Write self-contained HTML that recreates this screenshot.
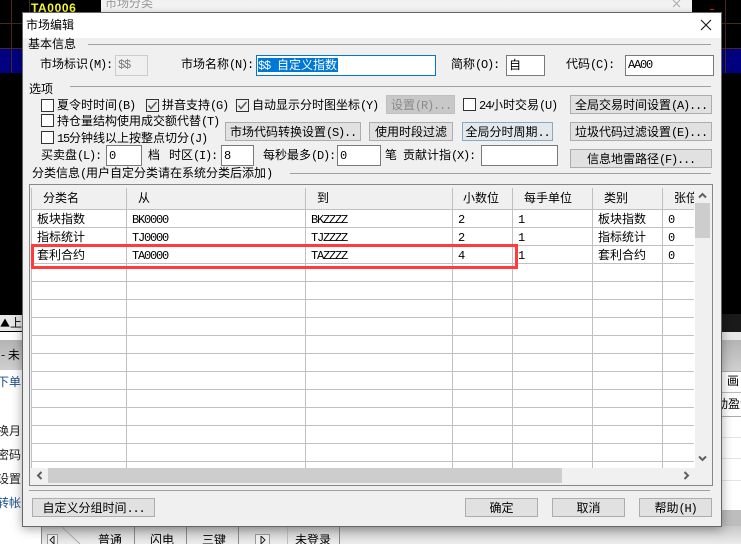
<!DOCTYPE html>
<html><head><meta charset="utf-8">
<style>
html,body{margin:0;padding:0;background:#000}
#r{position:relative;width:741px;height:544px;overflow:hidden;background:#000}
#r div,#r span.t{position:absolute;box-sizing:border-box}
.t{font:12px/14px "WenQuanYi Zen Hei","Noto Sans CJK SC",sans-serif;white-space:nowrap;color:#000}
i{font:normal 12px/14px "Liberation Mono",monospace;letter-spacing:-1.2px}
.b{background:#e1e1e1;border:1px solid #adadad;font:12px/17px "WenQuanYi Zen Hei","Noto Sans CJK SC",sans-serif;text-align:center;white-space:nowrap;color:#000;overflow:hidden}
.in{background:#fff;border:1px solid #7a7a7a;height:21px}
.l{background:#a0a0a0;height:1px}
.h{background:#c0c0c0;height:1px;left:31px;width:663px}
.v{background:#c0c0c0;width:1px}
.c{width:13px;height:13px;background:#fff;border:1px solid #333}
.c.k{background:#eee}
.c svg{position:absolute;left:0;top:0}
</style></head><body>
<div id="r">
<!-- background top -->
<div style="left:0;top:48px;width:741px;height:25px;background:#000080"></div>
<div style="left:0;top:23px;width:741px;height:1px;background:#4a2a20"></div>
<div style="left:0;top:48px;width:741px;height:1px;background:#4a2a20"></div>
<div style="left:11px;top:0;width:1px;height:73px;background:#4a2a20"></div>
<div style="left:29px;top:0;width:1px;height:73px;background:#4a2a20"></div>
<div style="left:725px;top:0;width:1px;height:73px;background:#4a2a20"></div>
<div style="left:710px;top:9px;width:4px;height:1px;background:#e02020"></div>
<span class="t" style="left:31px;top:1px;color:#ffff30;font:bold 12px/14px 'Liberation Sans',sans-serif;letter-spacing:.6px">TA0006</span>
<div style="left:101px;top:0;width:591px;height:13px;background:linear-gradient(#f0f0f0,#fff)"></div>
<span class="t" style="left:105px;top:-4px;color:#999">市场分类</span>
<svg style="position:absolute;left:672px;top:0" width="10" height="9"><path d="M1 0L8 7M8 0L1 7" stroke="#aaa" fill="none"/></svg>

<!-- background left bottom -->
<div style="left:0;top:315px;width:23px;height:17px;background:#e8e8e8;border-bottom:1px solid #000"></div>
<span class="t" style="left:0;top:316px"><span style="font-size:10px">▲</span>上</span>
<div style="left:0;top:332px;width:23px;height:212px;background:#fff"></div>
<div style="left:0;top:340px;width:23px;height:30px;background:linear-gradient(#b4b4b4,#cfcfcf)"></div>
<span class="t" style="left:1px;top:348px">- 未</span>
<span class="t" style="left:-3px;top:375px;color:#1a4f8a">下单</span>
<span class="t" style="left:-3px;top:424px;color:#222">换月</span>
<span class="t" style="left:-3px;top:448px;color:#222">密码</span>
<span class="t" style="left:-3px;top:472px;color:#222">设置</span>
<span class="t" style="left:-3px;top:496px;color:#1a4f8a">转帐</span>
<!-- background right bottom -->
<div style="left:721px;top:340px;width:20px;height:204px;background:#fff"></div>
<div style="left:721px;top:314px;width:20px;height:18px;background:#1a1a1a"></div>
<div style="left:721px;top:332px;width:20px;height:8px;background:#e8e8e8"></div>
<div style="left:721px;top:340px;width:20px;height:31px;background:linear-gradient(#b4b4b4,#cfcfcf)"></div>
<div style="left:721px;top:371px;width:20px;height:1px;background:#aaa"></div>
<div style="left:721px;top:392px;width:20px;height:1px;background:#bbb"></div>
<div style="left:721px;top:416px;width:20px;height:1px;background:#aaa"></div>
<div style="left:721px;top:437px;width:20px;height:1px;background:#e4e4e4"></div>
<div style="left:721px;top:458px;width:20px;height:1px;background:#e4e4e4"></div>
<div style="left:721px;top:480px;width:20px;height:1px;background:#e4e4e4"></div>
<div style="left:721px;top:510px;width:20px;height:16px;background:#bdbdbd"></div>
<div style="left:721px;top:526px;width:20px;height:18px;background:linear-gradient(#e4e4e4,#f2f2f2)"></div>
<span class="t" style="left:727px;top:374px">画</span>
<span class="t" style="left:716px;top:397px">动盈亏</span>
<!-- bottom strip -->
<div style="left:0;top:526px;width:741px;height:18px;background:linear-gradient(#c8c8c8,#ececec)"></div>
<div style="left:0;top:526px;width:42px;height:18px;background:#fff"></div>
<div style="left:41px;top:526px;width:1px;height:18px;background:#888"></div>
<div style="left:47px;top:534px;width:11px;height:10px;background:#f0f0f0;border:1px solid #999;border-bottom:0"></div>
<svg style="position:absolute;left:49px;top:536px" width="7" height="8"><path d="M5 0L1 4L5 8Z" fill="none" stroke="#222"/></svg>
<svg style="position:absolute;left:60px;top:526px" width="22" height="18"><path d="M1 0L20 18" stroke="#aaa" fill="none"/></svg>
<span class="t" style="left:98px;top:533px">普通</span>
<div style="left:134px;top:526px;width:1px;height:18px;background:#888"></div>
<span class="t" style="left:150px;top:533px">闪电</span>
<div style="left:186px;top:526px;width:1px;height:18px;background:#888"></div>
<span class="t" style="left:202px;top:533px">三键</span>
<div style="left:238px;top:526px;width:1px;height:18px;background:#888"></div>
<div style="left:255px;top:534px;width:15px;height:10px;background:#f0f0f0;border:1px solid #999;border-bottom:0"></div>
<svg style="position:absolute;left:260px;top:536px" width="7" height="8"><path d="M1 0L5 4L1 8Z" fill="none" stroke="#222"/></svg>
<div style="left:287px;top:526px;width:1px;height:18px;background:#bbb"></div>
<span class="t" style="left:295px;top:533px">未登录</span>
<div style="left:339px;top:526px;width:1px;height:18px;background:#888"></div>

<!-- dialog -->
<div style="left:22px;top:12px;width:700px;height:515px;background:#f0f0f0;border:1px solid #666;box-shadow:0 2px 10px rgba(0,0,0,.35)"></div>
<div style="left:23px;top:13px;width:698px;height:25px;background:#fff"></div>
<span class="t" style="left:26px;top:18px">市场编辑</span>
<svg style="position:absolute;left:700px;top:19px" width="12" height="12"><path d="M1 1L11 11M11 1L1 11" stroke="#111" stroke-width="1.1" fill="none"/></svg>

<span class="t" style="left:28px;top:37px">基本信息</span>
<div class="l" style="left:88px;top:44px;width:623px"></div>
<span class="t" style="left:40px;top:57px">市场标识<i>(M):</i></span>
<div style="left:115px;top:55px;width:33px;height:21px;background:#f0f0f0;border:1px solid #ccc"></div>
<span class="t" style="left:118px;top:57px;color:#777"><i>$$</i></span>
<span class="t" style="left:181px;top:57px">市场名称<i>(N):</i></span>
<div style="left:256px;top:55px;width:180px;height:21px;background:#fff;border:1px solid #0078d7"></div>
<div style="left:258px;top:58px;width:80px;height:14px;background:#0078d7"></div>
<span class="t" style="left:258px;top:58px;color:#fff"><i>$$</i><span style="margin-left:7px">自定义指数</span></span>
<span class="t" style="left:451px;top:57px">简称<i>(O):</i></span>
<div class="in" style="left:506px;top:55px;width:39px"></div>
<span class="t" style="left:509px;top:58px">自</span>
<span class="t" style="left:566px;top:57px">代码<i>(C):</i></span>
<div class="in" style="left:625px;top:55px;width:89px"></div>
<span class="t" style="left:628px;top:57px"><i>AA00</i></span>

<span class="t" style="left:29px;top:82px">选项</span>
<div class="l" style="left:70px;top:86px;width:641px"></div>
<div class="c" style="left:41px;top:99px"></div>
<span class="t" style="left:57px;top:98px">夏令时时间<i>(B)</i></span>
<div class="c k" style="left:146px;top:99px"><svg width="11" height="11"><path d="M1.5 5.5L4 8.5L9.5 2" stroke="#555" stroke-width="1.4" fill="none"/></svg></div>
<span class="t" style="left:162px;top:98px">拼音支持<i>(G)</i></span>
<div class="c k" style="left:236px;top:99px"><svg width="11" height="11"><path d="M1.5 5.5L4 8.5L9.5 2" stroke="#555" stroke-width="1.4" fill="none"/></svg></div>
<span class="t" style="left:252px;top:98px">自动显示分时图坐标<i>(Y)</i></span>
<div class="b" style="left:386px;top:95px;width:69px;height:19px;background:#c8c8c8;border-color:#c0c0c0;color:#8a8a8a;text-align:left;padding-left:4px">设置<i>(R)...</i></div>
<div class="c" style="left:463px;top:98px"></div>
<span class="t" style="left:479px;top:98px"><i>24</i>小时交易<i>(U)</i></span>
<div class="b" style="left:570px;top:95px;width:142px;height:19px">全局交易时间设置<i>(A)...</i></div>

<div class="c" style="left:41px;top:114px"></div>
<span class="t" style="left:57px;top:114px">持仓量结构使用成交额代替<i>(T)</i></span>
<div class="c" style="left:41px;top:131px"></div>
<span class="t" style="left:57px;top:131px"><i>15</i>分钟线以上按整点切分<i>(J)</i></span>
<div class="b" style="left:225px;top:122px;width:136px;height:19px">市场代码转换设置<i>(S)..</i></div>
<div class="b" style="left:369px;top:122px;width:84px;height:19px">使用时段过滤</div>
<div class="b" style="left:462px;top:122px;width:91px;height:19px;background:#e3e8ec;border-color:#8aa8c4">全局分时周期<i>..</i></div>
<div class="b" style="left:570px;top:122px;width:142px;height:19px">垃圾代码过滤设置<i>(E)...</i></div>
<div class="b" style="left:570px;top:149px;width:142px;height:19px">信息地雷路径<i>(F)...</i></div>

<span class="t" style="left:41px;top:148px">买卖盘<i>(L):</i></span>
<div class="in" style="left:106px;top:145px;width:36px"></div>
<span class="t" style="left:109px;top:148px"><i>0</i></span>
<span class="t" style="left:148px;top:148px">档</span>
<span class="t" style="left:169px;top:148px">时区<i>(I):</i></span>
<div class="in" style="left:221px;top:145px;width:33px"></div>
<span class="t" style="left:224px;top:148px"><i>8</i></span>
<span class="t" style="left:263px;top:148px">每秒最多<i>(D):</i></span>
<div class="in" style="left:337px;top:145px;width:44px"></div>
<span class="t" style="left:340px;top:148px"><i>0</i></span>
<span class="t" style="left:385px;top:148px">笔</span>
<span class="t" style="left:403px;top:148px">贡献计指<i>(X):</i></span>
<div class="in" style="left:481px;top:145px;width:77px"></div>

<span class="t" style="left:32px;top:166px">分类信息<i>(</i>用户自定分类请在系统分类后添加<i>)</i></span>
<div class="l" style="left:290px;top:173px;width:421px"></div>

<!-- list -->
<div style="left:29px;top:184px;width:684px;height:302px;background:#f0f0f0;border:1px solid #828790"></div>
<div style="left:31px;top:209px;width:664px;height:259px;background:#fff"></div>
<div class="h" style="top:209px"></div><div class="h" style="top:227px"></div><div class="h" style="top:245px"></div><div class="h" style="top:263px"></div><div class="h" style="top:281px"></div><div class="h" style="top:299px"></div><div class="h" style="top:317px"></div><div class="h" style="top:335px"></div><div class="h" style="top:353px"></div><div class="h" style="top:371px"></div><div class="h" style="top:389px"></div><div class="h" style="top:407px"></div><div class="h" style="top:425px"></div><div class="h" style="top:443px"></div><div class="h" style="top:461px"></div>
<div class="v" style="left:31px;top:188px;height:280px"></div>
<div class="v" style="left:126px;top:188px;height:280px"></div>
<div class="v" style="left:305px;top:188px;height:280px"></div>
<div class="v" style="left:452px;top:188px;height:280px"></div>
<div class="v" style="left:512px;top:188px;height:280px"></div>
<div class="v" style="left:592px;top:188px;height:280px"></div>
<div class="v" style="left:662px;top:188px;height:280px"></div>

<span class="t" style="left:43px;top:191px">分类名</span>
<span class="t" style="left:138px;top:191px">从</span>
<span class="t" style="left:317px;top:191px">到</span>
<span class="t" style="left:463px;top:191px">小数位</span>
<span class="t" style="left:524px;top:191px">每手单位</span>
<span class="t" style="left:604px;top:191px">类别</span>
<div class="t" style="left:674px;top:191px;width:20px;overflow:hidden">张倍</div>

<span class="t" style="left:37px;top:212px">板块指数</span><span class="t" style="left:132px;top:212px"><i>BK0000</i></span><span class="t" style="left:311px;top:212px"><i>BKZZZZ</i></span><span class="t" style="left:458px;top:212px"><i>2</i></span><span class="t" style="left:518px;top:212px"><i>1</i></span><span class="t" style="left:598px;top:212px">板块指数</span><span class="t" style="left:668px;top:212px"><i>0</i></span>
<span class="t" style="left:37px;top:230px">指标统计</span><span class="t" style="left:132px;top:230px"><i>TJ0000</i></span><span class="t" style="left:311px;top:230px"><i>TJZZZZ</i></span><span class="t" style="left:458px;top:230px"><i>2</i></span><span class="t" style="left:518px;top:230px"><i>1</i></span><span class="t" style="left:598px;top:230px">指标统计</span><span class="t" style="left:668px;top:230px"><i>0</i></span>
<span class="t" style="left:37px;top:248px">套利合约</span><span class="t" style="left:132px;top:248px"><i>TA0000</i></span><span class="t" style="left:311px;top:248px"><i>TAZZZZ</i></span><span class="t" style="left:458px;top:248px"><i>4</i></span><span class="t" style="left:518px;top:248px"><i>1</i></span><span class="t" style="left:598px;top:248px">套利合约</span><span class="t" style="left:668px;top:248px"><i>0</i></span>

<!-- scrollbars -->
<div style="left:695px;top:203px;width:15px;height:35px;background:#cdcdcd"></div>
<svg style="position:absolute;left:698px;top:192px" width="9" height="7"><path d="M1 5.5L4.5 2L8 5.5" stroke="#606060" stroke-width="2" fill="none"/></svg>
<svg style="position:absolute;left:698px;top:455px" width="9" height="7"><path d="M1 1.5L4.5 5L8 1.5" stroke="#606060" stroke-width="2" fill="none"/></svg>
<div style="left:48px;top:468px;width:514px;height:15px;background:#cdcdcd"></div>
<svg style="position:absolute;left:36px;top:471px" width="7" height="9"><path d="M5.5 1L2 4.5L5.5 8" stroke="#606060" stroke-width="2" fill="none"/></svg>
<svg style="position:absolute;left:683px;top:471px" width="7" height="9"><path d="M1.5 1L5 4.5L1.5 8" stroke="#606060" stroke-width="2" fill="none"/></svg>

<div class="l" style="left:29px;top:490px;width:681px"></div>
<div class="b" style="left:32px;top:498px;width:123px;height:19px">自定义分组时间<i>...</i></div>
<div class="b" style="left:465px;top:498px;width:73px;height:19px">确定</div>
<div class="b" style="left:552px;top:498px;width:73px;height:19px">取消</div>
<div class="b" style="left:639px;top:498px;width:73px;height:19px">帮助<i>(H)</i></div>

<!-- red highlight -->
<div style="left:31px;top:244px;width:487px;height:25px;border:3px solid #ff3b3b"></div>
</div>
</body></html>
